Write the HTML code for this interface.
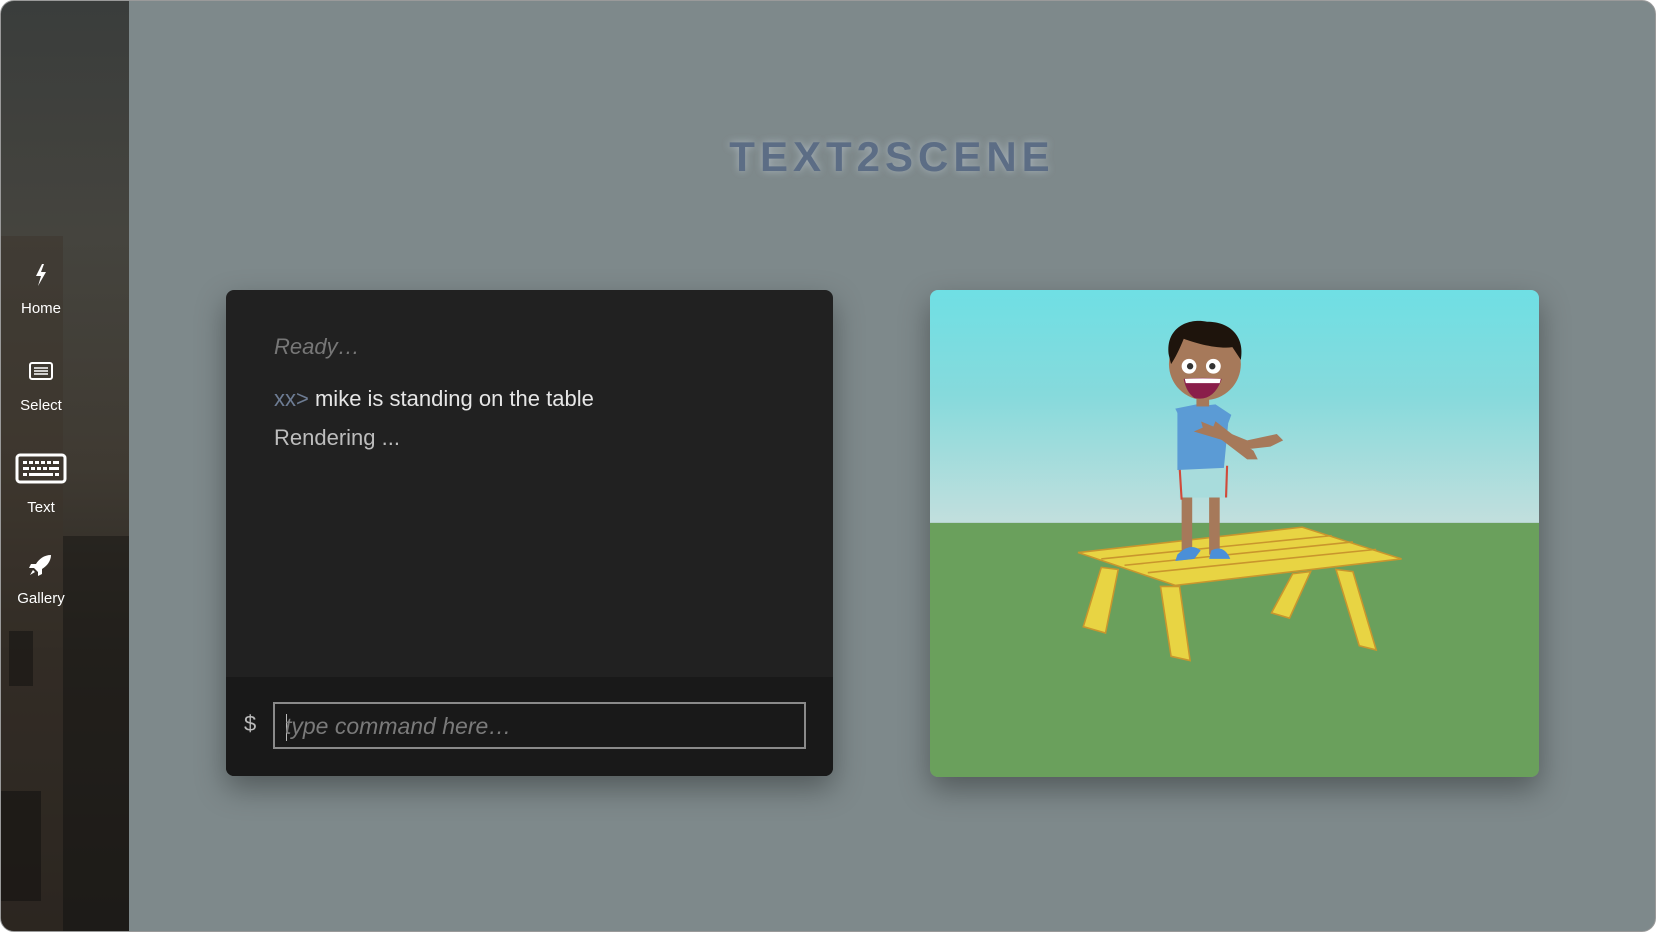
<!DOCTYPE html>
<html><head><meta charset="utf-8">
<style>
html,body{margin:0;padding:0;width:1656px;height:932px;overflow:hidden;background:#fff;}
.frame{position:absolute;left:0;top:0;width:1654px;height:930px;border:1px solid #9a9a9a;border-radius:14px;overflow:hidden;background:#7e898b;}
.side{position:absolute;left:0;top:0;width:128px;height:932px;background:linear-gradient(180deg,#3a3d3c 0%,#45443e 25%,#3f3a32 50%,#2b2722 70%,#1f1c19 100%);}
.side .bld{position:absolute;left:0;top:235px;width:62px;height:697px;background:#3b322a;opacity:.45}
.side .bld2{position:absolute;left:62px;top:535px;width:66px;height:397px;background:#1c1a18;opacity:.6}
.side .win{position:absolute;left:8px;top:630px;width:24px;height:55px;background:#151412;opacity:.6}
.side .door{position:absolute;left:0;top:790px;width:40px;height:110px;background:#141211;opacity:.6}
.nav{position:absolute;left:0;width:80px;text-align:center;color:#fff;font-family:"Liberation Sans",sans-serif;font-size:15px;}
.nav svg{display:block;margin:0 auto 6px;}
.title{position:absolute;left:128px;right:0;top:132px;text-align:center;font-family:"Liberation Sans",sans-serif;font-weight:bold;font-size:42px;letter-spacing:5px;color:#5c6d85;text-shadow:0 0 8px rgba(190,200,210,.7);}
.term{position:absolute;left:225px;top:289px;width:607px;height:486px;background:#212121;border-radius:8px;overflow:hidden;box-shadow:0 12px 30px rgba(0,0,0,.35);font-family:"Liberation Sans",sans-serif;}
.term .l{position:absolute;left:48px;font-size:22px;color:#c8c8c8;white-space:nowrap;}
.term .bot{position:absolute;left:0;right:0;top:387px;bottom:0;background:#191919;}
.inp{position:absolute;left:47px;top:25px;width:533px;height:47px;border:2px solid #8a8a8a;box-sizing:border-box;}
.inp span{position:absolute;left:10px;top:9px;font-size:23px;font-style:italic;color:#7a7a7a;}
.inp i{position:absolute;left:11px;top:10px;width:1px;height:27px;background:#bbb;}
.scene{position:absolute;left:929px;top:289px;width:609px;height:487px;border-radius:8px;overflow:hidden;box-shadow:0 12px 30px rgba(0,0,0,.35);}
</style></head><body>
<div class="frame">
<div class="side"><div class="bld"></div><div class="bld2"></div><div class="win"></div><div class="door"></div>
<div class="nav" style="top:263px"><svg width="14" height="22" viewBox="0 0 14 22"><path d="M8 0 L2 12 L7 12 L4 22 L12 8 L7 8 L10 0Z" fill="#fff"/></svg><div style="margin-top:14px">Home</div></div>
<div class="nav" style="top:360px"><svg width="24" height="20" viewBox="0 0 24 20"><rect x="1" y="2" width="22" height="16" rx="2" fill="none" stroke="#fff" stroke-width="2"/><path d="M5 7h14M5 10h14M5 13h14" stroke="#fff" stroke-width="1.5"/></svg><div style="margin-top:16px">Select</div></div>
<div class="nav" style="top:452px"><svg width="52" height="32" viewBox="0 0 52 32"><rect x="2" y="2" width="48" height="27" rx="3" fill="none" stroke="#fff" stroke-width="3"/><g fill="#fff"><rect x="8" y="8" width="4" height="3"/><rect x="14" y="8" width="4" height="3"/><rect x="20" y="8" width="4" height="3"/><rect x="26" y="8" width="4" height="3"/><rect x="32" y="8" width="4" height="3"/><rect x="38" y="8" width="6" height="3"/><rect x="8" y="14" width="6" height="3"/><rect x="16" y="14" width="4" height="3"/><rect x="22" y="14" width="4" height="3"/><rect x="28" y="14" width="4" height="3"/><rect x="34" y="14" width="10" height="3"/><rect x="8" y="20" width="4" height="3"/><rect x="14" y="20" width="24" height="3"/><rect x="40" y="20" width="4" height="3"/></g></svg><div style="margin-top:14px">Text</div></div>
<div class="nav" style="top:553px"><svg width="24" height="22" viewBox="0 0 24 22"><path d="M22 1 C15 1 10 5 7 10 L2 10 L0 14 L5 14 L9 18 L9 22 L13 20 L13 15 C18 12 22 7 22 1Z M4 16 L1 21 L6 18Z" fill="#fff"/></svg><div style="margin-top:14px">Gallery</div></div>
</div>
<div class="title">TEXT2SCENE</div>
<div class="term">
<div class="l" style="top:44px;font-style:italic;color:#777;">Ready…</div>
<div class="l" style="top:96px;"><span style="color:#6d7c93">xx&gt;</span> <span style="color:#e6e6e6">mike is standing on the table</span></div>
<div class="l" style="top:135px;color:#bdbdbd">Rendering ...</div>
<div class="bot"><div style="position:absolute;left:18px;top:34px;color:#bbb;font-size:22px;">$</div>
<div class="inp"><i></i><span>type command here…</span></div></div>
</div>
<div class="scene">
<svg width="609" height="487" viewBox="0 0 576 460" preserveAspectRatio="none">
<defs><linearGradient id="sky" x1="0" y1="0" x2="0" y2="1"><stop offset="0" stop-color="#6fdfe4"/><stop offset=".45" stop-color="#86dadc"/><stop offset="1" stop-color="#c2dfdd"/></linearGradient></defs>
<rect width="576" height="220" fill="url(#sky)"/>
<rect y="220" width="576" height="240" fill="#6aa05c"/>
<g fill="#e8d443" stroke="#c9962d" stroke-width="1.5">
<path d="M162 262 L178 264 L166 324 L145 318Z"/>
<path d="M218 280 L236 280 L246 350 L228 346Z"/>
<path d="M343 268 L360 266 L340 310 L323 305Z"/>
<path d="M384 264 L400 266 L422 340 L406 336Z"/>
<path d="M140 248 L352 224 L446 254 L232 279Z"/>
</g>
<g stroke="#c9962d" stroke-width="1.5"><path d="M162 254 L380 232"/><path d="M184 260 L400 238"/><path d="M206 267 L422 245"/></g>
<g fill="#a6795a"><rect x="238" y="180" width="10" height="70"/><rect x="264" y="180" width="10" height="70"/></g>
<rect x="236" y="166" width="46" height="30" fill="#a8dcdc"/>
<path d="M236 166 L238 198 M281 166 L280 196" stroke="#d04a3a" stroke-width="2"/>
<path d="M234 112 L270 108 L285 118 L282 126 L278 168 L234 170Z" fill="#5b9bd5"/>
<path d="M246 120 L300 142 L328 136 L334 142 L322 148 L304 150 L244 132Z" fill="#a6795a"/>
<path d="M270 124 L306 152 L310 160 L300 160 L266 134Z" fill="#a6795a"/>
<path d="M232 112 L252 108 L258 130 L244 136Z" fill="#5b9bd5"/>
<rect x="252" y="96" width="12" height="14" fill="#a6795a"/>
<ellipse cx="260" cy="70" rx="34" ry="34" fill="#a6795a"/>
<path d="M226 62 C222 36 244 26 262 30 C284 30 298 44 294 66 L286 54 C272 56 250 50 240 46 C236 56 232 64 228 70Z" fill="#1e140c"/>
<circle cx="245" cy="72" r="7" fill="#fff"/><circle cx="268" cy="72" r="7" fill="#fff"/>
<circle cx="246" cy="72" r="3" fill="#333"/><circle cx="267" cy="72" r="3" fill="#333"/>
<path d="M240 84 Q258 82 276 84 Q268 106 250 102 Q242 96 240 84Z" fill="#8a1e4a"/>
<path d="M241 84 Q258 83 275 84 L274 88 L242 88Z" fill="#fff"/>
<path d="M234 250 Q246 238 256 246 L250 254 L232 256Z" fill="#4a8fd8"/>
<path d="M266 246 Q278 240 284 254 L264 254Z" fill="#4a8fd8"/>
</svg>
</div>
</div>
</body></html>
